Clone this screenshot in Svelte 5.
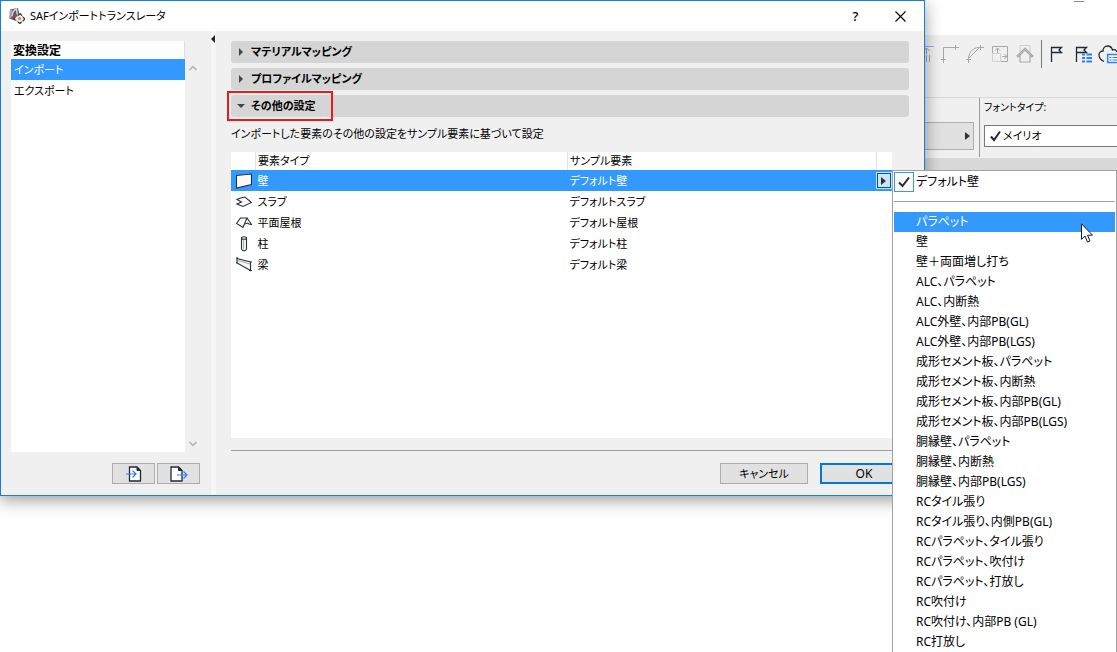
<script lang="ts">
	const translators = ['インポート', 'エクスポート'];
	let translator = $state('インポート');

	const panels = ['マテリアルマッピング', 'プロファイルマッピング', 'その他の設定'];
	let open = $state('その他の設定');

	const elements = [
		{ icon: 'wall', name: '壁', sample: 'デフォルト壁' },
		{ icon: 'slab', name: 'スラブ', sample: 'デフォルトスラブ' },
		{ icon: 'roof', name: '平面屋根', sample: 'デフォルト屋根' },
		{ icon: 'column', name: '柱', sample: 'デフォルト柱' },
		{ icon: 'beam', name: '梁', sample: 'デフォルト梁' }
	];
	let selected = $state('wall');

	const favorites = [
		'パラペット',
		'壁',
		'壁＋両面増し打ち',
		'ALC、パラペット',
		'ALC、内断熱',
		'ALC外壁、内部PB(GL)',
		'ALC外壁、内部PB(LGS)',
		'成形セメント板、パラペット',
		'成形セメント板、内断熱',
		'成形セメント板、内部PB(GL)',
		'成形セメント板、内部PB(LGS)',
		'胴縁壁、パラペット',
		'胴縁壁、内断熱',
		'胴縁壁、内部PB(LGS)',
		'RCタイル張り',
		'RCタイル張り、内側PB(GL)',
		'RCパラペット、タイル張り',
		'RCパラペット、吹付け',
		'RCパラペット、打放し',
		'RC吹付け',
		'RC吹付け、内部PB (GL)',
		'RC打放し'
	];
	let active = $state('パラペット');
</script>

<div class="screen">
	<div class="app">
		<div class="app-title"><span class="minimize"></span></div>
		<div class="toolbar">
			<button aria-label="Align">
				<svg width="20" height="20" viewBox="0 0 20 20" fill="none" stroke="#a8a8a8">
					<path d="M0 2.500h18" stroke="#8db8f5" />
					<path d="M10.500 4v6M8 7l2.500-3 3 3M10.500 11v7M13.500 11v7" />
				</svg>
			</button>
			<button aria-label="Corner">
				<svg width="20" height="20" viewBox="0 0 20 20" fill="none" stroke="#a8a8a8">
					<path d="M2.500 19V3.500H18M14.500 1v5M0 15.500h5" />
				</svg>
			</button>
			<button aria-label="Fillet">
				<svg width="20" height="20" viewBox="0 0 20 20" fill="none" stroke="#a8a8a8">
					<path d="M2.500 19V14C3 8 7 3.500 13 3.500h5M14.500 1v5M0 15.500h5M3 14L13 4" />
				</svg>
			</button>
			<button aria-label="Resize">
				<svg width="20" height="20" viewBox="0 0 20 20" fill="none" stroke="#a8a8a8">
					<path d="M1.500 9V2.500h15v15H10" />
					<path d="M1.500 9.500h8v8h-8z" stroke="#cfcfcf" />
					<path d="M6.500 9V4M4 6.500L6.500 4 9 6.500M11 12.500h5M13.500 10l2.500 2.500-2.500 2.500" />
				</svg>
			</button>
			<button aria-label="Roof trim">
				<svg width="20" height="20" viewBox="0 0 20 20" fill="none" stroke="#a8a8a8">
					<path d="M4 8V1.500h10V8" stroke="#cfcfcf" />
					<path d="M1 12l8-8 8 8-1 1-7-7-7 7zM4 11v7h10v-7" stroke-width="1.200" />
				</svg>
			</button>
			<span class="divider"></span>
			<button aria-label="Flag">
				<svg width="20" height="20" viewBox="0 0 20 20" fill="none" stroke="#1f2a33">
					<path d="M4.500 18V3.500h10L12 6l2.500 2.500h-10" stroke-width="1.300" />
				</svg>
			</button>
			<button class="wide" aria-label="Flag list">
				<svg width="20" height="20" viewBox="0 0 20 20" fill="none" stroke="#1f2a33">
					<path d="M4.500 18V3.500h10L12 6l2.500 2.500h-10" stroke-width="1.300" />
					<path d="M10 10.500h3M14.500 10.500H20M10 14h3M14.500 14H20M10 17.500h3M14.500 17.500H20" stroke="#2a7fff" stroke-width="2" />
				</svg>
			</button>
			<button class="cloud" aria-label="Cloud">
				<svg width="19" height="20" viewBox="0 0 19 20" fill="none" stroke="#1f2a33">
					<path d="M6 17.500C3 16 1 14 1 11c0-3 2-4 4-4 0-3 2-5 4.500-5S14 4 14.500 6c2-1 4 0 4.500 2" stroke-width="1.300" />
					<path d="M9.700 10.500H21v8H9.700z" stroke="#2a7fff" stroke-width="1.500" fill="#fff" />
					<path d="M11.500 13.500h2M14.500 13.500h5M11.500 16h2M14.500 16h5" stroke="#2a7fff" />
				</svg>
			</button>
		</div>
		<div class="info-bar">
			<button class="popup" aria-label="Choose">
				<svg width="5" height="8" viewBox="0 0 5 8"><path d="M0 0l5 4-5 4z" fill="#333" /></svg>
			</button>
			<div class="font-type">
				<label for="font">フォントタイプ:</label>
				<div class="select">
					<svg width="11" height="12" viewBox="0 0 11 12" fill="none" stroke="#1f2a33" stroke-width="2">
						<path d="M1 6.500L4 10 10 1.500" />
					</svg>
					<select id="font"><option>メイリオ</option></select>
				</div>
			</div>
		</div>
		<div class="strip"></div>
	</div>

	<div class="dialog" role="dialog" aria-labelledby="dialog-title">
		<header>
			<svg width="16" height="16" viewBox="0 0 16 16">
				<path d="M1 1.500L9 0l1.500 7-6 5-4-1.500z" fill="#545c74" />
				<path d="M1 2l2.500-.5L2 10l-1.500.5z" fill="#9aa3b8" />
				<path d="M3 9c0-4 2-7 4.500-8 0 3 .5 5 1.500 6.500" fill="none" stroke="#e6c9c6" stroke-width="1.500" />
				<path d="M2.500 9.500l5-2" stroke="#b64444" stroke-width="1.500" />
				<path d="M5 10.500L11 6l5 5-5.500 4.500z" fill="#efebe7" stroke="#8a7b70" stroke-width=".8" />
				<path d="M9 7.500l2-2 2 2M14 9l2 2-2 2M9 14l2 1.500 1.500-1.500M6 9l-1 2 1.500 1.500" fill="none" stroke="#3e3838" stroke-width="1.200" />
				<circle cx="10.500" cy="10.500" r="1.600" fill="#c29078" />
			</svg>
			<h1 id="dialog-title">SAFインポートトランスレータ</h1>
			<button class="help" aria-label="Help">?</button>
			<button aria-label="Close">
				<svg width="11" height="11" viewBox="0 0 11 11" stroke="#000" stroke-width="1.100">
					<path d="M.5.5l10 10M10.500.5l-10 10" />
				</svg>
			</button>
		</header>

		<div class="body">
			<aside>
				<div class="translators">
					<div class="list">
						<h2>変換設定</h2>
						<ul>
							{#each translators as name}
								<li>
									<button class:selected={translator === name} onclick={() => (translator = name)}>
										{name}
									</button>
								</li>
							{/each}
						</ul>
					</div>
					<div class="scroll">
						<svg width="8" height="6" viewBox="0 0 8 6" fill="none" stroke="#bcbcbc" stroke-width="1.800">
							<path d="M.5 5L4 1.500 7.500 5" />
						</svg>
						<svg width="8" height="6" viewBox="0 0 8 6" fill="none" stroke="#bcbcbc" stroke-width="1.800">
							<path d="M.5 1L4 4.500 7.500 1" />
						</svg>
					</div>
				</div>
				<div class="file-buttons">
					<button class="push" aria-label="Import settings">
						<svg width="18" height="16" viewBox="0 0 18 16" fill="none">
							<path d="M4.500 1h7.500l3.500 3.500V15h-11z" fill="#fff" stroke="#1f2a33" stroke-width="1.300" />
							<path d="M12 1v3.500h3.500z" fill="#1f2a33" stroke="#1f2a33" />
							<path d="M1 8h10M7.500 4.500L11 8 7.500 11.500" stroke="#2a7fff" stroke-width="1.200" />
						</svg>
					</button>
					<button class="push" aria-label="Export settings">
						<svg width="18" height="16" viewBox="0 0 18 16" fill="none">
							<path d="M1 1h7.500L12 4.500V15H1z" fill="#fff" stroke="#1f2a33" stroke-width="1.300" />
							<path d="M8.500 1v3.500H12z" fill="#1f2a33" stroke="#1f2a33" />
							<path d="M7 9h10M13.500 5.500L17 9l-3.500 3.500" stroke="#2a7fff" stroke-width="1.200" />
						</svg>
					</button>
				</div>
			</aside>

			<button class="splitter" aria-label="Collapse list">
				<svg width="4" height="8" viewBox="0 0 4 8"><path d="M4 0L0 4l4 4z" fill="#222" /></svg>
			</button>

			<main>
				<div class="panels">
					{#each panels as name}
						<button
							class="panel"
							class:marked={name === 'その他の設定'}
							aria-expanded={open === name}
							onclick={() => (open = name)}
						>
							<svg width="8" height="8" viewBox="0 0 8 8" fill="#444">
								<path d={open === name ? 'M0 2h8L4 6z' : 'M2 0l4 4-4 4z'} />
							</svg>
							{name}
						</button>
					{/each}
				</div>
				<p>インポートした要素のその他の設定をサンプル要素に基づいて設定</p>

				<div class="table-box">
					<table>
						<thead>
							<tr>
								<th class="icon"></th>
								<th class="type">要素タイプ</th>
								<th>サンプル要素</th>
								<th class="more"></th>
							</tr>
						</thead>
						<tbody>
							{#each elements as element}
								<tr class:selected={selected === element.icon} onclick={() => (selected = element.icon)}>
									<td class="icon">
										<svg width="16" height="16" viewBox="0 0 16 16" fill="#fafafa" stroke="#26323a" stroke-width="1.100">
											{#if element.icon === 'wall'}
												<path d="M.5 2.500l15-1.500v10.500l-15 3.500z" />
											{:else if element.icon === 'slab'}
												<path d="M4.500 4L9 3l6.500 5.500-8.500 4L1 10l4.500-2L1 5.500z" />
											{:else if element.icon === 'roof'}
												<path d="M4.500 3H11l-4 9.500L.5 8.500z" />
												<path d="M11 3l4.500 6.500-2.500-.5-1.500-1-2.500 1" fill="none" />
											{:else if element.icon === 'column'}
												<path d="M5.500 2v11c.5 2.500 4.500 2.500 5 0V2z" />
												<ellipse cx="8" cy="2" rx="2.500" ry="1.300" />
												<path d="M7.500 4v9" stroke="#aaa" />
											{:else}
												<path d="M1 1.500L14.500 5v8.500L1 6zM0 1h2M0 6h2M13 5h3M13 13.500h3" />
												<path d="M2 3.500L14 7" stroke="#aaa" />
											{/if}
										</svg>
									</td>
									<td>{element.name}</td>
									<td>{element.sample}</td>
									<td class="more">
										{#if selected === element.icon}
											<button aria-label="Choose sample element">
												<svg width="5" height="8" viewBox="0 0 5 8"><path d="M0 0l5 4-5 4z" fill="#333" /></svg>
											</button>
										{/if}
									</td>
								</tr>
							{/each}
						</tbody>
					</table>
				</div>

				<footer>
					<button class="push">キャンセル</button>
					<button class="push default">OK</button>
				</footer>
			</main>
		</div>
	</div>

	<div class="menu" role="menu">
		<button class="item current" role="menuitem">
			<span class="check">
				<svg width="12" height="12" viewBox="0 0 12 12" fill="none" stroke="#1f2a33" stroke-width="2">
					<path d="M1 6.500L4.500 10 11 1.500" />
				</svg>
			</span>
			デフォルト壁
		</button>
		<hr />
		{#each favorites as name}
			<button class="item" class:active={active === name} role="menuitem" onmouseenter={() => (active = name)}>
				{name}
			</button>
		{/each}
		<svg class="pointer" width="12" height="20" viewBox="0 0 12 20" fill="#fff" stroke="#1a1a2a">
			<path d="M.5.800v15.500l3.500-3.300 2.500 6 2.500-1-2.500-5.800h5z" />
		</svg>
	</div>
</div>

<style>
	:global(body) {
		background: #fff;
	}

	.screen {
		position: relative;
		height: 100vh;
		overflow: hidden;
		font-family: 'Noto Sans', 'Noto Sans CJK JP', sans-serif;
		font-size: 12px;
		line-height: 20px;
		font-feature-settings: 'palt';
		color: #000;
	}

	button,
	select {
		font: inherit;
		font-feature-settings: inherit;
		color: inherit;
		background: none;
		border: 0;
		border-radius: 0;
		padding: 0;
		margin: 0;
	}

	svg {
		display: block;
		flex: none;
	}

	h1,
	h2,
	p,
	ul {
		margin: 0;
		padding: 0;
		font-size: inherit;
		list-style: none;
	}

	/* Application behind the dialog */
	.app-title {
		display: flex;
		justify-content: flex-end;
		height: 35px;
		padding: 1px 33px 0 0;
		box-sizing: border-box;
	}

	.minimize {
		width: 10px;
		height: 1px;
		background: #888;
	}

	.toolbar {
		display: flex;
		justify-content: flex-end;
		gap: 5px;
		height: 63px;
		padding-top: 5px;
		box-sizing: border-box;
		background: #f0f0f0;
		border-bottom: 1px solid #d8d8d8;
	}

	.toolbar button {
		width: 20px;
		height: 28px;
	}

	.toolbar .wide {
		width: 21px;
	}

	.toolbar .cloud {
		width: 19px;
	}

	.divider {
		width: 1px;
		height: 28px;
		background: #777;
	}

	.info-bar {
		display: flex;
		justify-content: flex-end;
		height: 60px;
		background: #f0f0f0;
	}

	.popup {
		display: flex;
		align-items: center;
		justify-content: flex-end;
		width: 88px;
		height: 28px;
		margin: 24px 5px 0 0;
		padding-right: 3px;
		background: #e1e1e1;
		border: 1px solid #adadad;
	}

	.font-type {
		width: 133px;
		height: 59px;
		padding-left: 4px;
		border-left: 1px solid #999;
		font-size: 10px;
	}

	.font-type label {
		display: block;
		height: 27px;
		line-height: 18px;
	}

	.select {
		display: flex;
		align-items: center;
		gap: 2px;
		height: 20px;
		padding-left: 5px;
		background: #fff;
		border: 1px solid #7a7a7a;
		border-right: 0;
		font-size: 11px;
	}

	.select select {
		flex: 1;
		appearance: none;
	}

	.strip {
		height: 14px;
		background: #d8d8d8;
	}

	/* Dialog */
	.dialog {
		position: absolute;
		top: 0;
		left: 0;
		right: 192px;
		background: #f0f0f0;
		border: 1px solid #1a7fd0;
		box-shadow: 0 4px 16px rgba(0, 0, 0, 0.4);
	}

	header {
		display: flex;
		align-items: center;
		height: 30px;
		padding: 0 1px 0 8px;
		background: #fff;
	}

	h1 {
		flex: 1;
		padding-left: 5px;
		font-size: 11px;
		font-weight: 400;
	}

	header button {
		display: flex;
		align-items: center;
		justify-content: center;
		width: 45px;
		height: 30px;
	}

	header .help {
		font-size: 13px;
		font-weight: 500;
	}

	.body {
		display: flex;
		height: 464px;
	}

	aside {
		display: flex;
		flex-direction: column;
		width: 199px;
		padding: 10px 0 11px 10px;
		box-sizing: border-box;
	}

	.translators {
		display: flex;
		flex: 1;
	}

	.list {
		flex: 1;
		background: #fff;
	}

	h2 {
		height: 18px;
		padding-left: 2px;
		line-height: 20px;
		border-right: 1px solid #e0e0e0;
	}

	.list button {
		display: block;
		width: 100%;
		height: 21px;
		padding-left: 3px;
		font-size: 11px;
		text-align: left;
	}

	.selected {
		background: #39f;
		color: #fff;
	}

	.scroll {
		display: flex;
		flex-direction: column;
		align-items: center;
		justify-content: space-between;
		width: 15px;
		padding: 24px 0 5px;
		box-sizing: border-box;
	}

	.file-buttons {
		display: flex;
		justify-content: flex-end;
		gap: 2px;
		padding-top: 11px;
	}

	.push {
		display: flex;
		align-items: center;
		justify-content: center;
		width: 88px;
		height: 21px;
		background: #e1e1e1;
		border: 1px solid #adadad;
		font-size: 11px;
	}

	.file-buttons .push {
		width: 43px;
	}

	.splitter {
		display: flex;
		align-items: flex-start;
		justify-content: flex-start;
		width: 5px;
		margin-left: 11px;
		padding-top: 4px;
		background: #f7f7f7;
	}

	main {
		display: flex;
		flex: 1;
		flex-direction: column;
		min-width: 0;
		padding: 10px 15px 11px;
	}

	.panels {
		display: flex;
		flex-direction: column;
		gap: 5px;
	}

	.panel {
		position: relative;
		display: flex;
		align-items: center;
		gap: 6px;
		height: 22px;
		padding-left: 6px;
		background: #d5d5d5;
		border-radius: 3px;
		font-size: 11px;
		font-weight: 700;
	}

	.marked::after {
		content: '';
		position: absolute;
		top: -4px;
		left: -4px;
		width: 102px;
		height: 26px;
		border: 2px solid #f01818;
	}

	p {
		padding: 7px 0 8px;
		font-size: 11px;
	}

	.table-box {
		flex: 1;
		margin-right: 17px;
		background: #fff;
	}

	table {
		width: 100%;
		table-layout: fixed;
		border-collapse: collapse;
	}

	th,
	td {
		height: 21px;
		padding: 0 0 0 2px;
		text-align: left;
		line-height: 20px;
		font-size: 11px;
		font-weight: 400;
	}

	th {
		height: 18px;
		line-height: 18px;
		border-right: 1px solid #e3e3e3;
	}

	th:last-child {
		border-right: 0;
	}

	.icon {
		width: 19px;
		padding-left: 5px;
	}

	.type {
		width: 309px;
	}

	.more {
		width: 15px;
		padding: 0;
	}

	.more button {
		display: flex;
		align-items: center;
		justify-content: center;
		width: 14px;
		height: 15px;
		background: #cce4f7;
		border: 1px solid #005499;
		outline: 1px solid #cce4f7;
	}

	footer {
		display: flex;
		justify-content: flex-end;
		gap: 12px;
		margin-top: 12px;
		padding: 12px 1px 0 0;
		border-top: 1px solid #a0a0a0;
	}

	.default {
		border: 2px solid #0078d7;
		font-size: 12px;
	}

	/* Sample element menu */
	.menu {
		position: absolute;
		top: 170px;
		right: 0;
		width: 221px;
		padding: 1px;
		background: #fff;
		border: 1px solid #a0a0a5;
	}

	.item {
		display: block;
		width: 100%;
		height: 20px;
		padding-left: 22px;
		text-align: left;
		white-space: nowrap;
	}

	.current {
		display: flex;
		gap: 2px;
		padding-left: 0;
	}

	.check {
		display: flex;
		align-items: center;
		justify-content: center;
		width: 18px;
		height: 18px;
		border: 1px solid #39f;
	}

	.active {
		background: #39f;
		color: #fff;
	}

	hr {
		margin: 9px 0 10px;
		border: 0;
		border-top: 1px solid #a0a0a0;
	}

	.pointer {
		position: absolute;
		top: 52px;
		right: 23px;
	}
</style>
